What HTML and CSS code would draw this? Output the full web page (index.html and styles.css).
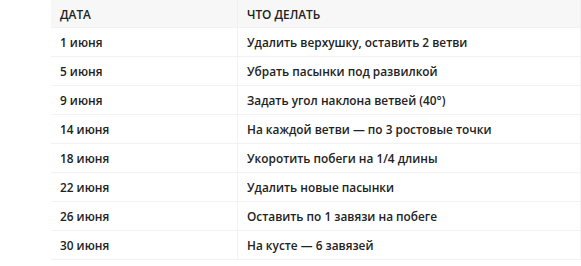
FILE: index.html
```html
<!DOCTYPE html>
<html lang="ru">
<head>
<meta charset="utf-8">
<link rel="stylesheet" href="styles.css">
</head>
<body>
<table class="plan">
  <thead>
    <tr><th class="c-date">Дата</th><th class="c-task">Что делать</th></tr>
  </thead>
  <tbody>
    <tr><td>1 июня</td><td>Удалить верхушку, оставить 2 ветви</td></tr>
    <tr><td>5 июня</td><td>Убрать пасынки под развилкой</td></tr>
    <tr><td>9 июня</td><td>Задать угол наклона ветвей (40°)</td></tr>
    <tr><td>14 июня</td><td>На каждой ветви — по 3 ростовые точки</td></tr>
    <tr><td>18 июня</td><td>Укоротить побеги на 1/4 длины</td></tr>
    <tr><td>22 июня</td><td>Удалить новые пасынки</td></tr>
    <tr><td>26 июня</td><td>Оставить по 1 завязи на побеге</td></tr>
    <tr><td>30 июня</td><td>На кусте — 6 завязей</td></tr>
  </tbody>
</table>
</body>
</html>
```

FILE: styles.css
```css
html, body {
  margin: 0;
  padding: 0;
  background: #ffffff;
}
.plan {
  margin-left: 51px;
  width: 530px;
  border-collapse: collapse;
  font-family: "Open Sans", "Noto Sans", sans-serif;
  font-size: 11.85px;
  font-weight: 600;
  color: #222222;
}
.plan th {
  background: #f7f7f7;
  text-align: left;
  text-transform: uppercase;
  font-weight: 600;
  height: 27px;
  padding: 0 9px;
  border-right: 1px solid #f0f0f0;
}
.plan td {
  height: 28px;
  padding: 0 9px;
  border-top: 1px solid #f2f2f2;
  border-right: 1px solid #f2f2f2;
}
.plan tr > :first-child {
  width: 168px;
}
.plan tbody tr:last-child td {
  border-bottom: 1px solid #f2f2f2;
}
```
